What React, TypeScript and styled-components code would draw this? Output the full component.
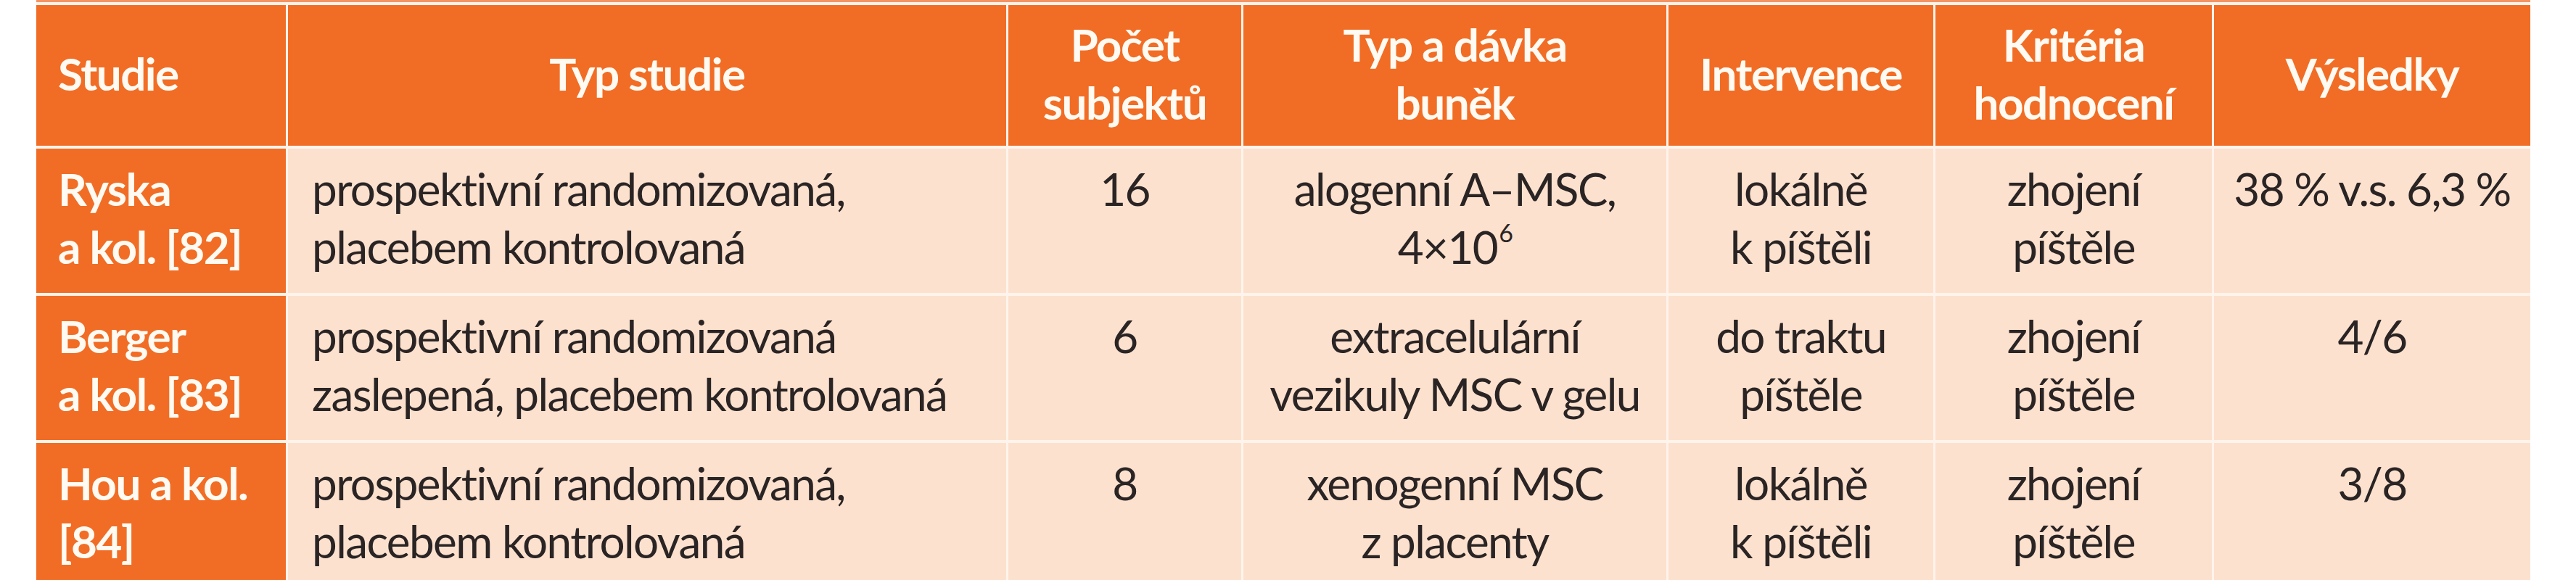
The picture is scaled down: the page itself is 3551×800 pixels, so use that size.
import React from "react";
import styled, { createGlobalStyle } from "styled-components";

const GlobalStyle = createGlobalStyle`
  html, body {
    margin: 0;
    padding: 0;
    background: #ffffff;
    overflow: hidden;
  }
  body {
    width: 3551px;
    height: 800px;
    font-family: Lato, "Open Sans", "Liberation Sans", sans-serif;
  }
`;

const ORANGE = "#F16D25";
const PEACH = "#FCE1CE";
const LINE = "#FFF4EC";

const Page = styled.div`
  width: 3551px;
  height: 800px;
  padding-left: 50px;
  box-sizing: border-box;
  overflow: hidden;
`;

const TopEdge = styled.div`
  width: 3438px;
  height: 3px;
  background: #F49463;
`;

const Table = styled.div`
  display: grid;
  width: 3438px;
  grid-template-columns: 344px 990px 321px 583px 365px 381px 436px;
  grid-template-rows: 194px 199px 199px 199px;
  column-gap: 3px;
  row-gap: 4px;
  padding-top: 4px;
  background: ${LINE};
`;

const HeadCell = styled.div<{ $left?: boolean }>`
  background: ${ORANGE};
  color: #FFFAF2;
  font-weight: 700;
  font-size: 62px;
  line-height: 80px;
  letter-spacing: -1.5px;
  display: flex;
  flex-direction: column;
  justify-content: center;
  align-items: ${(p) => (p.$left ? "flex-start" : "center")};
  text-align: ${(p) => (p.$left ? "left" : "center")};
  padding: 0 0 6px ${(p) => (p.$left ? "30px" : "0")};
  box-sizing: border-box;
  white-space: nowrap;
`;

const StudyCell = styled.div`
  background: ${ORANGE};
  color: #FFFAF2;
  font-weight: 700;
  font-size: 62px;
  line-height: 80px;
  letter-spacing: -1.5px;
  padding: 15px 0 0 30px;
  box-sizing: border-box;
  white-space: nowrap;
`;

const BodyCell = styled.div<{ $left?: boolean }>`
  background: ${PEACH};
  color: #2A2424;
  font-weight: 400;
  font-size: 62px;
  line-height: 80px;
  letter-spacing: -1.6px;
  text-align: ${(p) => (p.$left ? "left" : "center")};
  padding: 15px 0 0 ${(p) => (p.$left ? "33px" : "0")};
  box-sizing: border-box;
  white-space: nowrap;
`;

const Sup = styled.sup`
  font-size: 34px;
  line-height: 0;
  vertical-align: 30px;
  margin-left: 2px;
`;

const Line = styled.span`
  display: block;
`;

type Row = {
  study: string[];
  type: string[];
  count: string;
  cells: React.ReactNode[];
  intervention: string[];
  criteria: string[];
  result: string;
};

const rows: Row[] = [
  {
    study: ["Ryska", "a kol. [82]"],
    type: ["prospektivní randomizovaná,", "placebem kontrolovaná"],
    count: "16",
    cells: [
      "alogenní A–MSC,",
      <>
        4×10<Sup>6</Sup>
      </>,
    ],
    intervention: ["lokálně", "k píštěli"],
    criteria: ["zhojení", "píštěle"],
    result: "38 % v.s. 6,3 %",
  },
  {
    study: ["Berger", "a kol. [83]"],
    type: ["prospektivní randomizovaná", "zaslepená, placebem kontrolovaná"],
    count: "6",
    cells: ["extracelulární", "vezikuly MSC v gelu"],
    intervention: ["do traktu", "píštěle"],
    criteria: ["zhojení", "píštěle"],
    result: "4/6",
  },
  {
    study: ["Hou a kol.", "[84]"],
    type: ["prospektivní randomizovaná,", "placebem kontrolovaná"],
    count: "8",
    cells: ["xenogenní MSC", "z placenty"],
    intervention: ["lokálně", "k píštěli"],
    criteria: ["zhojení", "píštěle"],
    result: "3/8",
  },
];

const lines = (items: React.ReactNode[]) =>
  items.map((t, i) => <Line key={i}>{t}</Line>);

export default function App() {
  return (
    <>
      <GlobalStyle />
      <Page>
        <TopEdge />
        <Table>
          <HeadCell $left>Studie</HeadCell>
          <HeadCell>Typ studie</HeadCell>
          <HeadCell>{lines(["Počet", "subjektů"])}</HeadCell>
          <HeadCell>{lines(["Typ a dávka", "buněk"])}</HeadCell>
          <HeadCell>Intervence</HeadCell>
          <HeadCell>{lines(["Kritéria", "hodnocení"])}</HeadCell>
          <HeadCell>Výsledky</HeadCell>
          {rows.map((r, i) => (
            <React.Fragment key={i}>
              <StudyCell>{lines(r.study)}</StudyCell>
              <BodyCell $left>{lines(r.type)}</BodyCell>
              <BodyCell>{r.count}</BodyCell>
              <BodyCell>{lines(r.cells)}</BodyCell>
              <BodyCell>{lines(r.intervention)}</BodyCell>
              <BodyCell>{lines(r.criteria)}</BodyCell>
              <BodyCell>{r.result}</BodyCell>
            </React.Fragment>
          ))}
        </Table>
      </Page>
    </>
  );
}
